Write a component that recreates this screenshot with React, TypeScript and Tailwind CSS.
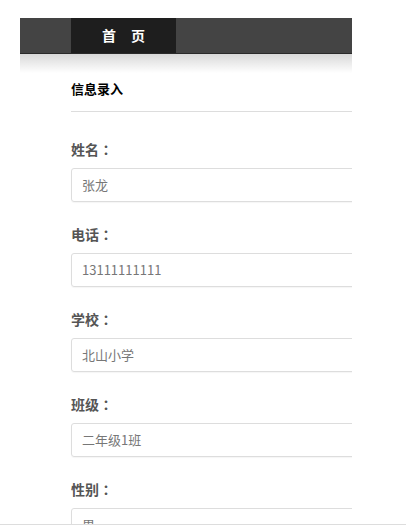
const fields = [
  { label: '姓名', value: '张龙' },
  { label: '电话', value: '13111111111' },
  { label: '学校', value: '北山小学' },
  { label: '班级', value: '二年级1班' },
  { label: '性别', value: '男' },
];

export default function App() {
  return (
    <div className="min-h-[527px] bg-white font-['Noto_Sans_CJK_SC','Liberation_Sans',sans-serif]">
      <div className="ml-[20px] w-[332px] overflow-hidden pt-[18px]">
        {/* top nav */}
        <div className="flex h-[36px] border-b border-[#2a2a2a] bg-[#444444] pl-[51px]">
          <div className="flex w-[105px] items-center justify-center bg-[#1e1e1e] pl-[6px] text-[14px] font-bold tracking-[6px] text-white">
            首 页
          </div>
        </div>
        <div className="h-[19px] bg-gradient-to-b from-[#d9d9d9] to-white" />

        <div className="pl-[51px]">
          <h2 className="pt-[6px] text-[13px] leading-[20px] font-bold text-black">信息录入</h2>
          <div className="mt-[12px] h-px w-[300px] bg-[#dddddd]" />

          <div className="pt-[27px]">
            {fields.map((f) => (
              <div key={f.label} className="mb-[22px]">
                <div className="mb-[9px] text-[14px] leading-[20px] font-bold text-[#555555]">
                  {f.label}
                  <span className="font-['Noto_Sans_CJK_TC',sans-serif]">：</span>
                </div>
                <div className="flex h-[34px] w-[320px] items-center rounded-[3px] border border-[#dddddd] pl-[10px] text-[13px] text-[#777777] shadow-[0_1px_1px_rgba(0,0,0,0.04)]">
                  {f.value}
                </div>
              </div>
            ))}
          </div>
        </div>
      </div>
      <div className="fixed bottom-0 left-0 h-[3px] w-full border-t border-[#dddddd] bg-white" />
    </div>
  );
}
